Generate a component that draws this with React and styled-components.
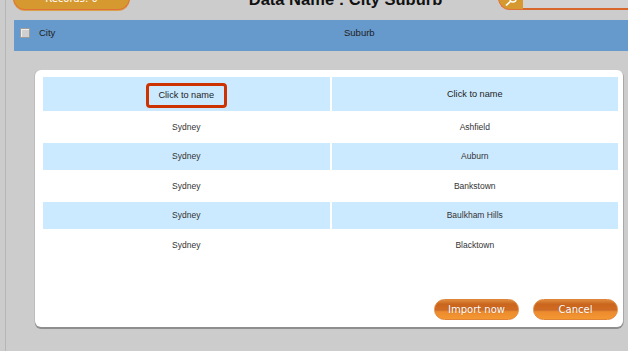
import React from 'react';
import styled, { createGlobalStyle } from 'styled-components';

const GlobalStyle = createGlobalStyle`
  html, body {
    margin: 0;
    padding: 0;
    background: #cccccc;
    font-family: "Liberation Sans", Arial, sans-serif;
    overflow: hidden;
  }
`;

const Page = styled.div`
  display: flex;
  min-height: 100vh;
`;

const Rail = styled.div`
  flex: 0 0 5px;
  border-right: 1px solid #b6b6b6;
`;

const Main = styled.div`
  flex: 1;
  min-width: 0;
  display: flex;
  flex-direction: column;
  padding-left: 8px;
  overflow: hidden;
`;

const TopBar = styled.div`
  display: flex;
  align-items: flex-start;
  height: 24px;
  margin-top: -13px;
`;

const CountButton = styled.div`
  flex: 0 0 117px;
  height: 23px;
  margin-left: -1px;
  box-sizing: border-box;
  border: 1px solid #e2703a;
  border-top: none;
  border-radius: 0 0 12px 12px;
  background: #d6992f;
  box-shadow: 0 1px 0 #d9a24a;
  color: #fff;
  font-family: "DejaVu Sans", Verdana, sans-serif;
  font-size: 10px;
  line-height: 23px;
  text-align: center;
`;

const Title = styled.div`
  flex: 1;
  padding: 3px 0 0 63px;
  text-align: center;
  font-size: 16.5px;
  font-weight: bold;
  line-height: 19px;
  color: #111;
`;

const Search = styled.div`
  flex: 0 0 130px;
  display: flex;
  height: 23px;
`;

const SearchIcon = styled.div`
  flex: 0 0 25px;
  box-sizing: border-box;
  background: #d6992f;
  border: 1px solid #e2703a;
  border-right: none;
  border-radius: 0 0 0 12px;
  display: flex;
  align-items: flex-end;
  justify-content: center;
  padding-bottom: 3px;
`;

const SearchInput = styled.div`
  flex: 1;
  box-sizing: border-box;
  height: 23px;
  background: #d3d3d3;
  border-bottom: 2px solid #d8672c;
`;

const HeaderBar = styled.div`
  display: flex;
  align-items: flex-start;
  height: 31px;
  margin-top: 9px;
  padding: 7px 0 0 6px;
  box-sizing: border-box;
  background: #6699cc;
`;

const Check = styled.span`
  flex: 0 0 10px;
  height: 10px;
  margin: 1px 9px 0 0;
  box-sizing: border-box;
  background: #d0d0d0;
  border: 1px solid #9c9c9c;
  box-shadow: inset 1px 1px 0 #eeeeee;
`;

const ColLabel = styled.span`
  flex: 0 0 ${(p) => p.$width || 'auto'};
  font-size: 9.5px;
  line-height: 11px;
  color: #1e1e1e;
`;

const Dialog = styled.div`
  display: flex;
  flex-direction: column;
  height: 257px;
  margin: 19px 5px 0 21px;
  padding: 7px 5px 7px 8px;
  box-sizing: border-box;
  background: #ffffff;
  border-radius: 6px;
  box-shadow: 0 2px 0 #8e8e8e, 1px 1px 0 #a8a8a8, -1px 0 0 #bdbdbd;
`;

const Grid = styled.div`
  display: grid;
  grid-template-columns: 1fr 1fr;
  grid-template-rows: 34px;
  grid-auto-rows: 27.5px;
  gap: 2px;
`;

const Cell = styled.div`
  display: flex;
  align-items: center;
  justify-content: center;
  background: ${(p) => (p.$shaded ? '#cceaff' : '#ffffff')};
  font-size: ${(p) => (p.$head ? '9.2px' : '8.5px')};
  color: ${(p) => (p.$head ? '#222' : '#333')};
`;

const NameBox = styled.span`
  display: inline-flex;
  align-items: center;
  justify-content: center;
  width: 81px;
  height: 25px;
  margin-top: 2px;
  box-sizing: border-box;
  border: 3px solid #cc3300;
  border-radius: 4px;
`;

const Actions = styled.div`
  display: flex;
  justify-content: flex-end;
  gap: 14px;
  margin-top: auto;
`;

const OrangeButton = styled.button`
  width: 85px;
  height: 21px;
  padding: 0;
  box-sizing: border-box;
  border: 1px solid #e0843a;
  border-radius: 11px;
  background: linear-gradient(
    to bottom,
    #de8a3c 0%,
    #c9651d 22%,
    #d06a20 45%,
    #c86a28 52%,
    #ec8b2e 62%,
    #f49832 100%
  );
  color: #fff;
  font-family: "DejaVu Sans", Verdana, sans-serif;
  font-size: 10px;
  line-height: 19px;
  text-shadow: 0 0 1px rgba(120, 50, 0, 0.5);
`;

const rows = [
  ['Sydney', 'Ashfield'],
  ['Sydney', 'Auburn'],
  ['Sydney', 'Bankstown'],
  ['Sydney', 'Baulkham Hills'],
  ['Sydney', 'Blacktown'],
];

const App = () => {
  return (
    <>
      <GlobalStyle />
      <Page>
        <Rail />
        <Main>
          <TopBar>
            <CountButton>Records: 0</CountButton>
            <Title>Data Name : City Suburb</Title>
            <Search>
              <SearchIcon>
                <svg width="12" height="10" viewBox="0 0 12 10">
                  <circle cx="8" cy="3" r="3" fill="none" stroke="#fff" strokeWidth="1.4" />
                  <line x1="5.8" y1="5.2" x2="1" y2="9.5" stroke="#fff" strokeWidth="1.6" />
                </svg>
              </SearchIcon>
              <SearchInput />
            </Search>
          </TopBar>
          <HeaderBar>
            <Check />
            <ColLabel $width="305px">City</ColLabel>
            <ColLabel>Suburb</ColLabel>
          </HeaderBar>
          <Dialog>
            <Grid>
              <Cell $head $shaded>
                <NameBox>Click to name</NameBox>
              </Cell>
              <Cell $head $shaded>
                Click to name
              </Cell>
              {rows.map((row, index) =>
                row.map((value, col) => (
                  <Cell key={`${index}-${col}`} $shaded={index % 2 === 1}>
                    {value}
                  </Cell>
                ))
              )}
            </Grid>
            <Actions>
              <OrangeButton>Import now</OrangeButton>
              <OrangeButton>Cancel</OrangeButton>
            </Actions>
          </Dialog>
        </Main>
      </Page>
    </>
  );
};

export default App;
